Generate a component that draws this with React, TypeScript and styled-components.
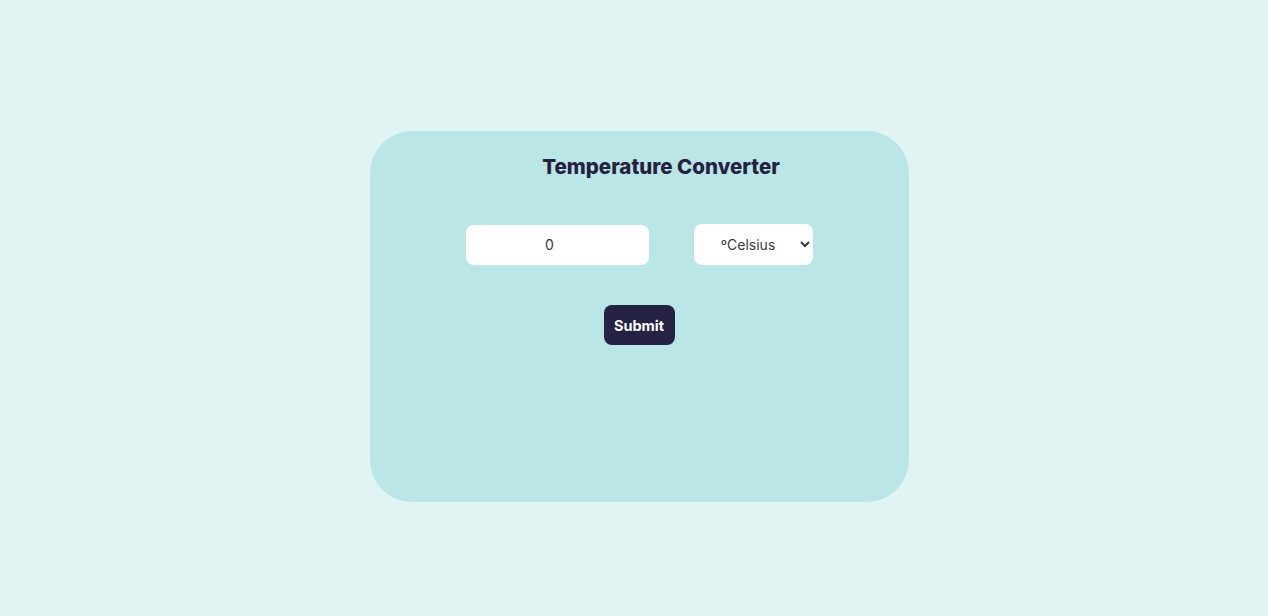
import React, { FC, useState } from "react";
import styled, { createGlobalStyle } from "styled-components";

const GlobalStyle = createGlobalStyle`
  html, body {
    margin: 0;
    padding: 0;
    background: #e1f4f4;
    font-family: "Inter", "Open Sans", sans-serif;
  }
`;

const Page = styled.div`
  height: 616px;
  display: flex;
  justify-content: center;
  padding: 131px 0 0 10px;
  box-sizing: border-box;
`;

const Card = styled.div`
  width: 539px;
  height: 371px;
  background: #bae6e7;
  border-radius: 42px;
  box-sizing: border-box;
  padding-top: 24px;
  display: flex;
  flex-direction: column;
  align-items: center;
`;

const Title = styled.h2`
  margin: 0 0 45px 44px;
  font-size: 20.5px;
  line-height: 24px;
  font-weight: 800;
  color: #25213f;
`;

const Row = styled.div`
  display: flex;
  align-items: center;
  gap: 45px;
  margin-bottom: 40px;
`;

const NumberInput = styled.input`
  width: 183px;
  height: 40px;
  box-sizing: border-box;
  border: none;
  border-radius: 8px;
  background: #fff;
  text-align: center;
  font-family: inherit;
  font-size: 14px;
  color: #3a3a3a;
  outline: none;
`;

const UnitSelect = styled.select`
  width: 119px;
  height: 41px;
  box-sizing: border-box;
  border: none;
  border-radius: 8px;
  background: #fff;
  text-align: center;
  padding: 0 6px 0 8px;
  font-family: inherit;
  font-size: 14px;
  color: #3a3a3a;
  outline: none;
`;

const SubmitButton = styled.button`
  width: 71px;
  height: 40px;
  border: none;
  border-radius: 8px;
  background: #262244;
  color: #fff;
  font-family: inherit;
  font-weight: 700;
  font-size: 14.5px;
  cursor: pointer;
`;

const App: FC = () => {
  const [value, setValue] = useState<string>("0");
  const [unit, setUnit] = useState<string>("c");

  return (
    <>
      <GlobalStyle />
      <Page>
        <Card>
          <Title>Temperature Converter</Title>
          <Row>
            <NumberInput
              type="number"
              value={value}
              onChange={(e) => setValue(e.target.value)}
            />
            <UnitSelect value={unit} onChange={(e) => setUnit(e.target.value)}>
              <option value="c">ºCelsius</option>
              <option value="f">ºFahrenheit</option>
              <option value="k">Kelvin</option>
            </UnitSelect>
          </Row>
          <SubmitButton>Submit</SubmitButton>
        </Card>
      </Page>
    </>
  );
};

export default App;
